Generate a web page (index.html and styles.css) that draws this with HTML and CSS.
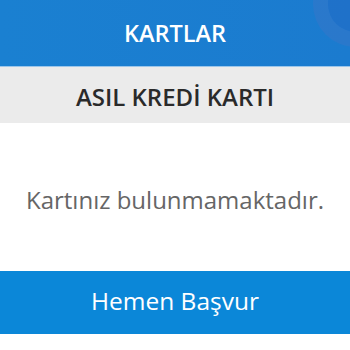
FILE: index.html
```html
<!DOCTYPE html>
<html lang="tr">
<head>
<meta charset="utf-8">
<link rel="stylesheet" href="styles.css">
</head>
<body>
<header class="topbar">
  <span class="deco"></span>
  <h1 class="title">KARTLAR</h1>
</header>
<div class="section">
  <h2 class="section-title">ASIL KREDİ KARTI</h2>
</div>
<div class="message">
  <p class="message-text">Kartınız bulunmamaktadır.</p>
</div>
<button class="apply">Hemen Başvur</button>
</body>
</html>
```

FILE: styles.css
```css
* { box-sizing: border-box; }
html, body { margin: 0; padding: 0; background: #fff; }
body {
  width: 350px;
  font-family: "Open Sans", "Noto Sans", sans-serif;
  display: flex;
  flex-direction: column;
}
.topbar {
  position: relative;
  overflow: hidden;
  height: 67px;
  background: linear-gradient(90deg, #1a80d1 0%, #1b7bcf 100%);
  border-bottom: 1px solid #9cc6ea;
  display: flex;
  align-items: center;
  justify-content: center;
}
.deco {
  position: absolute;
  left: 313px;
  top: -39px;
  width: 86px;
  height: 86px;
  border-radius: 50%;
  border: 15px solid rgba(255,255,255,0.05);
  background: rgba(60,60,170,0.14);
}
.title {
  position: relative;
  margin: 0;
  color: #fff;
  font-size: 23.5px;
  font-weight: 600;
  line-height: 30px;
}
.section {
  height: 56px;
  background: #ebebeb;
  display: flex;
  align-items: center;
  justify-content: center;
}
.section-title {
  margin: 0;
  color: #2a2a2a;
  font-size: 24px;
  font-weight: 600;
  line-height: 30px;
  padding-top: 3px;
}
.message {
  height: 148px;
  display: flex;
  align-items: center;
  justify-content: center;
  padding-top: 6px;
}
.message-text {
  margin: 0;
  color: #666;
  font-size: 24px;
  line-height: 30px;
}
.apply {
  height: 63px;
  border: 0;
  margin: 0;
  background: #0b87d8;
  color: #fff;
  font-family: inherit;
  font-size: 24.5px;
  line-height: 30px;
  padding: 0 0 4px;
}
```
